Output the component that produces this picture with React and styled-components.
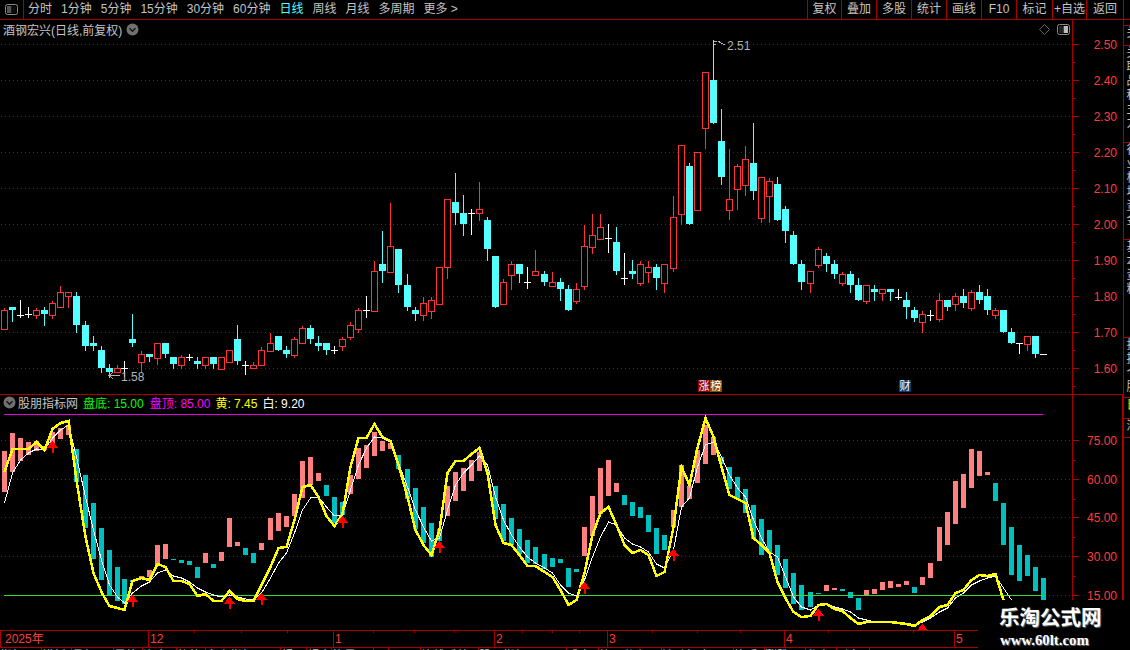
import React from "react"
import styled, { createGlobalStyle } from "styled-components"

const LINE = "#a80000"
const AXIS_TEXT = "#ff3c3c"
const FONT = `"Liberation Sans", "Noto Sans CJK SC", sans-serif`

const GlobalStyle = createGlobalStyle`
  html, body {
    margin: 0;
    padding: 0;
    background: #000;
  }
  body {
    font-family: ${FONT};
  }
`

// [x, type, bodyTop, bodyBottom, high, low] in page pixels
const candles = [
  [4,"r",310,329,308,329],[12,"c",307,310,307,321],[20,"w",315,315,300,318],[28,"w",314,314,307,318],
  [36,"r",310,315,308,318],[44,"c",310,314,307,325],[52,"r",303,315,301,318],[60,"r",292,307,286,307],
  [68,"r",292,296,292,307],[76,"c",296,325,292,332],[85,"c",325,346,321,350],[93,"c",343,346,336,350],
  [101,"c",350,368,346,372],[109,"c",368,372,364,377],[117,"r",368,372,365,372],[124,"w",368,368,361,377],
  [132,"c",339,343,314,346],[141,"r",354,362,351,372],[149,"c",354,357,354,361],[157,"r",343,358,343,364],
  [165,"c",343,354,343,357],[173,"c",357,364,357,368],[181,"r",357,365,355,368],[189,"w",357,357,354,361],
  [197,"c",361,364,357,368],[205,"r",357,365,357,368],[213,"c",357,364,357,368],[221,"r",357,369,357,369],
  [229,"r",350,362,350,362],[237,"c",339,361,325,364],[245,"w",365,365,361,375],[253,"r",365,368,362,368],
  [261,"r",350,365,347,365],[270,"r",343,351,333,351],[278,"c",336,350,336,350],[286,"c",350,354,346,357],
  [294,"r",339,355,337,357],[302,"r",328,343,326,343],[310,"c",328,339,325,343],[318,"c",343,346,336,350],
  [326,"c",343,350,343,354],[334,"w",350,350,346,354],[342,"r",339,346,337,350],[350,"r",325,337,322,339],
  [358,"r",310,329,308,332],[366,"w",310,310,296,318],[374,"r",271,311,261,311],[382,"c",264,271,231,282],
  [390,"r",246,272,203,272],[398,"c",249,285,249,292],[407,"c",285,307,274,310],[415,"c",310,314,307,320],
  [423,"r",303,315,297,320],[431,"r",300,311,297,318],[439,"r",267,304,267,304],[447,"r",199,267,199,278],
  [455,"c",202,213,173,224],[463,"c",213,224,195,235],[471,"w",213,213,209,235],[479,"r",209,213,182,220],
  [487,"c",220,249,217,260],[495,"c",256,307,256,307],[503,"r",282,304,279,304],[511,"r",264,275,261,289],
  [519,"c",264,274,264,282],[527,"w",282,282,267,289],[535,"r",271,275,250,275],[544,"c",274,282,271,285],
  [552,"r",282,286,272,286],[560,"c",282,289,278,300],[568,"c",289,310,285,310],[576,"r",289,301,283,303],
  [584,"r",246,286,225,289],[592,"r",235,247,214,253],[600,"r",227,239,214,239],[608,"w",238,238,224,253],
  [616,"c",242,271,227,274],[624,"w",278,278,253,285],[632,"c",271,274,260,278],[640,"r",264,283,261,285],
  [648,"r",267,272,261,282],[656,"c",267,278,264,289],[664,"r",264,283,264,292],[673,"r",217,268,196,271],
  [681,"r",145,214,145,224],[689,"c",166,224,163,224],[697,"r",152,210,152,210],[705,"r",72,128,72,148],
  [713,"c",80,123,40,123],[721,"c",141,177,109,184],[729,"r",199,210,149,219],[737,"r",166,189,164,209],
  [745,"r",159,185,146,195],[753,"c",163,191,123,199],[761,"r",177,218,177,222],[769,"r",181,196,178,222],
  [777,"c",184,220,177,220],[785,"c",209,231,206,242],[793,"c",235,264,231,264],[801,"c",264,282,260,289],
  [810,"r",271,283,271,292],[818,"r",249,265,247,267],[826,"c",256,264,253,271],[834,"c",264,274,260,278],
  [842,"r",274,283,272,285],[850,"c",274,285,271,292],[858,"c",285,300,278,300],[866,"r",285,301,285,303],
  [874,"c",289,292,285,300],[882,"r",289,293,289,300],[890,"c",289,292,289,300],[898,"w",297,297,289,300],
  [906,"c",300,307,292,318],[914,"c",310,318,307,321],[922,"r",314,322,311,332],[930,"w",315,315,310,321],
  [939,"r",300,319,293,321],[947,"c",300,307,300,310],[955,"r",296,304,293,310],[963,"c",296,303,289,307],
  [971,"r",292,308,290,310],[979,"c",292,300,285,303],[987,"c",296,310,289,314],[995,"r",310,315,308,318],
  [1003,"c",310,332,310,332],[1011,"c",332,343,328,343],[1019,"w",343,343,343,354],[1027,"r",336,344,336,350],
  [1035,"c",336,354,336,357],[1043,"w",354,354,354,354],
]

// [type, top, bottom] by candle index, p is pink and t is teal
const bars = [
  ["p",451,492],["p",433,472],["p",438,461],["p",442,455],["p",441,451],["p",446,450],["p",432,443],["p",428,439],
  ["p",425,435],["t",449,482],["t",475,528],["t",503,559],["t",528,580],["t",550,595],["t",567,601],["t",579,604],
  ["t",580,582],["p",576,579],["p",570,577],["p",545,565],["p",544,559],["t",559,560],["t",560,563],["t",561,565],
  ["t",567,578],["p",553,563],["t",564,568],["p",552,561],["p",518,547],["p",542,546],["t",548,555],["t",553,563],
  ["p",543,550],["p",518,540],["p",513,531],["p",516,527],["p",494,516],["p",461,498],["p",457,485],["p",473,481],
  ["t",485,496],["t",497,523],["t",502,515],["p",475,494],["p",448,479],["p",445,468],["p",432,456],["p",441,451],
  ["p",443,449],["t",455,469],["t",469,499],["t",488,529],["t",507,543],["t",523,557],["t",529,541],["p",486,516],
  ["p",472,501],["p",468,491],["p",460,481],["p",452,471],["t",470,472],["t",486,519],["t",504,541],["t",518,545],
  ["t",529,554],["t",540,563],["t",547,564],["t",554,569],["t",558,567],["t",559,563],["t",568,587],["t",569,572],
  ["p",527,556],["p",496,536],["p",468,514],["p",460,496],["p",483,492],["t",495,505],["t",502,516],["t",507,518],
  ["t",515,532],["t",528,554],["t",535,550],["p",510,527],["p",465,507],["p",486,499],["p",450,483],["p",425,464],
  ["p",437,455],["t",457,464],["t",467,489],["t",477,499],["t",489,513],["t",505,539],["t",519,555],["t",530,553],
  ["t",545,575],["t",559,588],["t",573,604],["t",585,610],["t",592,607],["t",593,594],["p",585,591],["p",588,590],
  ["t",589,591],["t",592,598],["t",598,610],["p",590,596],["p",589,594],["p",582,590],["p",581,588],["p",584,587],
  ["p",581,585],["t",587,593],["p",577,585],["p",563,578],["p",527,561],["p",512,545],["p",481,524],["p",474,508],
  ["p",449,488],["p",451,476],["p",472,475],["t",483,501],["t",503,545],["t",527,575],["t",545,581],["t",555,576],
  ["t",567,591],["t",578,600],
]

const yellowLine = [
  472,449,449,449,442,450,429,423,421,480,537,573,592,606,608,610,581,578,580,564,
  567,581,581,584,596,594,601,601,591,599,601,601,585,567,548,547,520,487,485,497,
  516,526,514,467,438,438,424,437,441,465,497,530,545,555,530,473,461,461,454,448,
  473,525,543,545,555,566,566,572,577,590,605,600,573,535,513,507,525,545,553,550,
  555,576,572,527,467,485,448,418,437,467,495,499,503,538,545,553,582,598,612,617,
  616,605,604,609,611,618,624,622,622,622,622,623,624,626,620,616,607,605,593,590,
  580,575,576,574,600,
]

const whiteLine = [
  503,473,460,453,449,450,438,430,425,457,497,530,560,585,597,603,593,586,582,573,
  570,576,578,582,588,592,595,597,595,597,599,600,593,578,563,553,533,510,498,497,
  507,516,515,490,465,448,437,438,442,463,487,510,527,541,538,510,485,473,465,456,
  465,497,520,535,547,557,563,568,573,585,593,596,580,557,537,522,525,538,544,547,
  552,564,568,550,507,498,467,445,442,457,475,488,497,520,538,552,557,577,597,607,
  610,605,604,607,609,612,618,620,622,622,622,623,623,625,622,618,612,608,598,593,
  585,581,578,576,588,600,
]

// [x, tip, tail]
const arrows = [
  [52.5,441,453],[132.5,595,607],[229.5,597,609],[261.5,593,605],[342.5,516,528],
  [439.5,541,553],[584.5,582,594],[673.5,549,561],[818.5,609,621],[922.5,624,636],
]

const priceTicks = ["2.50","2.40","2.30","2.20","2.10","2.00","1.90","1.80","1.70","1.60"]
const indicatorTicks = [["75.00",440],["60.00",479],["45.00",517],["30.00",556],["15.00",595]]

const timeLabels = [["2025年",0],["12",148],["1",333],["2",494],["3",607],["4",784],["5",954]]
const timeMinor = [194,241,287,373,414,454,522,552,579,652,697,740,828,913]

const leftTools = ["分时","1分钟","5分钟","15分钟","30分钟","60分钟","日线","周线","月线","多周期","更多 >"]
const rightTools = [
  ["复权",34],["叠加",35],["多股",35],["统计",35],["画线",35],["F10",35],["标记",36],["+自选",34],["返回",37],
]
const sideTabs = [
  ["",5,""],["关",19,""],["关联品种主力",96,""],["行业板块资金",96,""],["基本资料",97,""],
  ["扶持个股",59,""],["日",20,"#e8e800"],["深",18,""],["",212,""],
]
const bottomTabs = [
  ["指标",42],["模板",30],["叠加",42],["量能",29],["资金",34],["趋势",29],["多空指标",75],["超买",26],
  ["超卖",25],["能量",42],["K",15],["MA",32],["均线系统",58],["股朋指标网",88],["成交",32],["筹码分布",63],
  ["波动幅度",72],["换手",31],["涨跌",41],["龙虎",31],["财务",33],
]

const Page = styled.div`
  position: relative;
  width: 1130px;
  height: 650px;
  overflow: hidden;
  background: #000;
  display: flex;
  flex-direction: column;
`

const Toolbar = styled.div`
  height: 19px;
  flex: none;
  display: flex;
  align-items: stretch;
  border-bottom: 1px solid ${LINE};
  padding-right: 6px;
`

const ToggleBox = styled.div`
  width: 23px;
  flex: none;
  display: flex;
  align-items: center;
  justify-content: center;
  border-right: 1px solid ${LINE};
  margin-right: 4px;
`

const ToolList = styled.div`
  display: flex;
  align-items: center;
  gap: 9px;
  flex: 1;
`

const Tool = styled.span`
  font-size: 12px;
  line-height: 19px;
  white-space: nowrap;
  color: ${p => (p.$active ? "#54ffff" : "#c4c4c4")};
`

const ToolButtons = styled.div`
  display: flex;
  border-right: 1px solid ${LINE};
`

const ToolButton = styled.div`
  width: ${p => p.$width}px;
  box-sizing: border-box;
  border-left: 1px solid ${LINE};
  font-size: 12px;
  line-height: 19px;
  text-align: center;
  white-space: nowrap;
  color: #c4c4c4;
`

const Body = styled.div`
  flex: 1;
  display: flex;
  min-height: 0;
`

const Charts = styled.div`
  width: 1123px;
  flex: none;
  display: flex;
  flex-direction: column;
`

const MainPane = styled.div`
  position: relative;
  height: 374px;
  flex: none;
  display: flex;
  border-bottom: 1px solid ${LINE};
`

const IndicatorPane = styled.div`
  position: relative;
  height: 235px;
  flex: none;
  display: flex;
  box-sizing: border-box;
  border-right: 1px solid ${LINE};
`

const ChartSvg = styled.svg`
  display: block;
  flex: none;
  shape-rendering: crispEdges;
`

const Axis = styled.div`
  flex: 1;
  min-width: 0;
  border-left: 1px solid ${LINE};
  overflow: hidden;
`

const AxisLabel = styled.text`
  font-family: ${FONT};
  font-size: 12px;
  fill: ${AXIS_TEXT};
  text-anchor: end;
`

const PriceNote = styled.text`
  font-family: ${FONT};
  font-size: 12px;
  fill: #b4b4b4;
`

const ChartTitle = styled.div`
  position: absolute;
  top: 0;
  left: 3px;
  height: 18px;
  display: flex;
  align-items: center;
  gap: 4px;
  font-size: 12px;
  white-space: nowrap;
  color: #c4c4c4;
`

const CornerIcons = styled.div`
  position: absolute;
  top: 4px;
  left: 1039px;
  display: flex;
  align-items: center;
  gap: 7px;
`

const Tag = styled.span`
  position: absolute;
  top: 360px;
  left: ${p => p.$left}px;
  width: 12px;
  height: 12px;
  font-size: 11px;
  line-height: 12px;
  text-align: center;
  color: #fff;
  background: ${p => p.$bg};
`

const Legend = styled.div`
  position: absolute;
  top: 0;
  left: 3px;
  height: 15px;
  display: flex;
  align-items: center;
  font-size: 12px;
  white-space: nowrap;
`

const LegendItem = styled.span`
  color: ${p => p.$color};
  margin-left: ${p => p.$gap}px;
`

const TimeAxis = styled.svg`
  display: block;
  flex: none;
  shape-rendering: crispEdges;
`

const TimeLabel = styled.text`
  font-family: ${FONT};
  font-size: 12px;
  fill: ${AXIS_TEXT};
`

const BottomTabs = styled.div`
  flex: none;
  height: 3px;
  display: flex;
  overflow: hidden;
  border-top: 1px solid ${LINE};
`

const BottomTab = styled.div`
  width: ${p => p.$width}px;
  flex: none;
  box-sizing: border-box;
  border-right: 1px solid ${LINE};
  font-size: 12px;
  line-height: 17px;
  color: #c4c4c4;
  white-space: nowrap;
  overflow: hidden;
`

const SideStrip = styled.div`
  flex: 1;
  min-width: 0;
  display: flex;
  flex-direction: column;
  border-left: 1px solid ${LINE};
  overflow: hidden;
`

const SideTab = styled.div`
  height: ${p => p.$height}px;
  flex: none;
  overflow: hidden;
  border-bottom: 1px solid ${LINE};
`

const SideText = styled.div`
  width: 14px;
  writing-mode: vertical-rl;
  text-orientation: upright;
  font-size: 12px;
  line-height: 14px;
  letter-spacing: 2px;
  color: ${p => p.$color || "#c4c4c4"};
`

const Watermark = styled.div`
  position: absolute;
  right: 0;
  bottom: 0;
  width: 152px;
  height: 50px;
  background: #000;
  display: flex;
  flex-direction: column;
  align-items: flex-start;
  padding-left: 21px;
  box-sizing: border-box;
  color: #fff;
  font-family: "Liberation Serif", "Noto Sans CJK SC", serif;
  font-weight: 700;
  text-shadow: 1px 1px 1px #777;
`

const WatermarkTitle = styled.div`
  font-size: 20.5px;
  line-height: 24px;
  margin-top: 6px;
  white-space: nowrap;
`

const WatermarkUrl = styled.div`
  font-size: 14.8px;
  line-height: 16px;
  margin-top: 2px;
  margin-left: 1px;
  white-space: nowrap;
`

const PanelIcon = ({ fillLeft }) => (
  <svg width="13" height="11" viewBox="0 0 13 11">
    <rect x="0.5" y="0.5" width="12" height="10" rx="2" fill="none" stroke="#8a8a8a" />
    <rect x={fillLeft ? 2 : 6.5} y="2" width="4.5" height="7" fill={fillLeft ? "#555" : "#bcbcbc"} />
    <rect x={fillLeft ? 6.5 : 2} y="2" width="4.5" height="7" fill={fillLeft ? "#0c0c0c" : "#222"} />
  </svg>
)

const CircleChevron = () => (
  <svg width="13" height="13" viewBox="0 0 13 13">
    <circle cx="6.5" cy="6.5" r="6" fill="#707070" />
    <path d="M3.5 5.2 6.5 8.2 9.5 5.2" fill="none" stroke="#141414" strokeWidth="1.4" />
  </svg>
)

const DiamondIcon = () => (
  <svg width="11" height="11" viewBox="0 0 11 11">
    <path d="M5.5.5 10.5 5.5 5.5 10.5.5 5.5Z" fill="none" stroke="#666" />
  </svg>
)

const Candle = ({ x, type, top, bottom, high, low }) => {
  if (type === "w") {
    return (
      <g fill="#fff">
        <rect x={x} y={high} width="1" height={Math.max(low - high, 0)} />
        <rect x={x - 3} y={top} width="7" height="1" />
      </g>
    )
  }
  const color = type === "r" ? "#ff3333" : "#54ffff"
  return (
    <g>
      <rect x={x} y={high} width="1" height={low - high + 1} fill={color} />
      {type === "r" ? (
        <rect x={x - 2.5} y={top + 0.5} width="6" height={bottom - top} fill="#000" stroke={color} />
      ) : (
        <rect x={x - 3} y={top} width="7" height={bottom - top} fill={color} />
      )}
    </g>
  )
}

const points = list => list.map((y, i) => `${candles[i][0] + 0.5},${y}`).join(" ")

const DottedGrid = ({ rows }) => (
  <g stroke="#a80000" strokeDasharray="1 3">
    {rows.map(y => (
      <line key={y} x1="1" x2="1072" y1={y + 0.5} y2={y + 0.5} />
    ))}
  </g>
)

const PriceChart = () => (
  <ChartSvg width="1072" height="374" viewBox="0 20 1072 374">
    <DottedGrid rows={[44, 80, 116, 152, 188, 224, 260, 296, 332, 368]} />
    {candles.map(([x, type, top, bottom, high, low]) => (
      <Candle key={x} x={x} type={type} top={top} bottom={bottom} high={high} low={low} />
    ))}
    <path d="M713.5 41H717M713.5 44H716M718 41l3 2 4 2" fill="none" stroke="#b4b4b4" />
    <PriceNote x="727" y="50">2.51</PriceNote>
    <path d="M120 375.5H109M113 372l-4 3.5 4 3.5" fill="none" stroke="#b4b4b4" />
    <PriceNote x="121" y="381">1.58</PriceNote>
  </ChartSvg>
)

const PriceAxis = () => (
  <ChartSvg width="50" height="374" viewBox="1073 20 50 374">
    {priceTicks.map((label, i) => {
      const y = 44 + i * 36
      return (
        <g key={label}>
          <rect x="1073" y={y} width="6" height="1" fill={LINE} />
          <rect x="1073" y={y + 18} width="3" height="1" fill={LINE} />
          <AxisLabel x="1117" y={y + 5}>{label}</AxisLabel>
        </g>
      )
    })}
  </ChartSvg>
)

const IndicatorChart = () => (
  <ChartSvg width="1072" height="235" viewBox="0 395 1072 235">
    <DottedGrid rows={[440, 479, 517, 556, 595]} />
    {bars.map(([type, top, bottom], i) => (
      <rect
        key={i}
        x={candles[i][0] - 2}
        y={top}
        width="5"
        height={bottom - top}
        fill={type === "p" ? "#ff8080" : "#00bfc0"}
      />
    ))}
    <rect x="4" y="414" width="1039" height="1" fill="#e000e0" />
    <rect x="4" y="595" width="1039" height="1" fill="#33dd33" />
    <polyline points={points(whiteLine)} fill="none" stroke="#fff" strokeWidth="1" />
    <polyline points={points(yellowLine)} fill="none" stroke="#ffff00" strokeWidth="2.5" />
    {arrows.map(([x, tip, tail]) => (
      <g key={x} fill="#ff0000">
        <polygon points={`${x},${tip} ${x + 6},${tip + 7} ${x - 6},${tip + 7}`} />
        <rect x={x - 1} y={tip + 6} width="2" height={tail - tip - 6} />
      </g>
    ))}
  </ChartSvg>
)

const IndicatorAxis = () => (
  <ChartSvg width="49" height="235" viewBox="1073 395 49 235">
    {indicatorTicks.map(([label, y]) => (
      <g key={label}>
        <rect x="1073" y={y} width="6" height="1" fill={LINE} />
        <rect x="1073" y={y + 20} width="3" height="1" fill={LINE} />
        <AxisLabel x="1117" y={y + 5}>{label}</AxisLabel>
      </g>
    ))}
  </ChartSvg>
)

const DateAxis = () => (
  <TimeAxis width="1123" height="17" viewBox="0 630 1123 17">
    <rect x="0" y="630" width="1123" height="1" fill={LINE} />
    {timeMinor.map(x => (
      <rect key={x} x={x} y="630" width="1" height="3" fill={LINE} />
    ))}
    {timeLabels.map(([label, x]) => (
      <g key={label}>
        <rect x={x} y="630" width="1" height="17" fill={LINE} />
        <TimeLabel x={x + (x ? 2 : 5)} y="643">{label}</TimeLabel>
      </g>
    ))}
  </TimeAxis>
)

export default function App() {
  return (
    <Page>
      <GlobalStyle />
      <Toolbar>
        <ToggleBox>
          <PanelIcon fillLeft />
        </ToggleBox>
        <ToolList>
          {leftTools.map(label => (
            <Tool key={label} $active={label === "日线"}>{label}</Tool>
          ))}
        </ToolList>
        <ToolButtons>
          {rightTools.map(([label, width]) => (
            <ToolButton key={label} $width={width}>{label}</ToolButton>
          ))}
        </ToolButtons>
      </Toolbar>
      <Body>
        <Charts>
          <MainPane>
            <PriceChart />
            <Axis>
              <PriceAxis />
            </Axis>
            <ChartTitle>
              酒钢宏兴(日线,前复权)
              <CircleChevron />
            </ChartTitle>
            <CornerIcons>
              <DiamondIcon />
              <PanelIcon />
            </CornerIcons>
            <Tag $left={698} $bg="#8c0000">涨</Tag>
            <Tag $left={710} $bg="#8a4a00">榜</Tag>
            <Tag $left={899} $bg="#0a3a6e">财</Tag>
          </MainPane>
          <IndicatorPane>
            <IndicatorChart />
            <Axis>
              <IndicatorAxis />
            </Axis>
            <Legend>
              <CircleChevron />
              <LegendItem $color="#c4c4c4" $gap={2}>股朋指标网</LegendItem>
              <LegendItem $color="#00ff00" $gap={5}>盘底: 15.00</LegendItem>
              <LegendItem $color="#ff00ff" $gap={6}>盘顶: 85.00</LegendItem>
              <LegendItem $color="#ffff00" $gap={5}>黄: 7.45</LegendItem>
              <LegendItem $color="#ffffff" $gap={5}>白: 9.20</LegendItem>
            </Legend>
          </IndicatorPane>
          <DateAxis />
          <BottomTabs>
            {bottomTabs.map(([label, width]) => (
              <BottomTab key={label} $width={width}>{label}</BottomTab>
            ))}
          </BottomTabs>
        </Charts>
        <SideStrip>
          {sideTabs.map(([label, height, color], i) => (
            <SideTab key={i} $height={height}>
              <SideText $color={color}>{label}</SideText>
            </SideTab>
          ))}
        </SideStrip>
      </Body>
      <Watermark>
        <WatermarkTitle>乐淘公式网</WatermarkTitle>
        <WatermarkUrl>www.60lt.com</WatermarkUrl>
      </Watermark>
    </Page>
  )
}
